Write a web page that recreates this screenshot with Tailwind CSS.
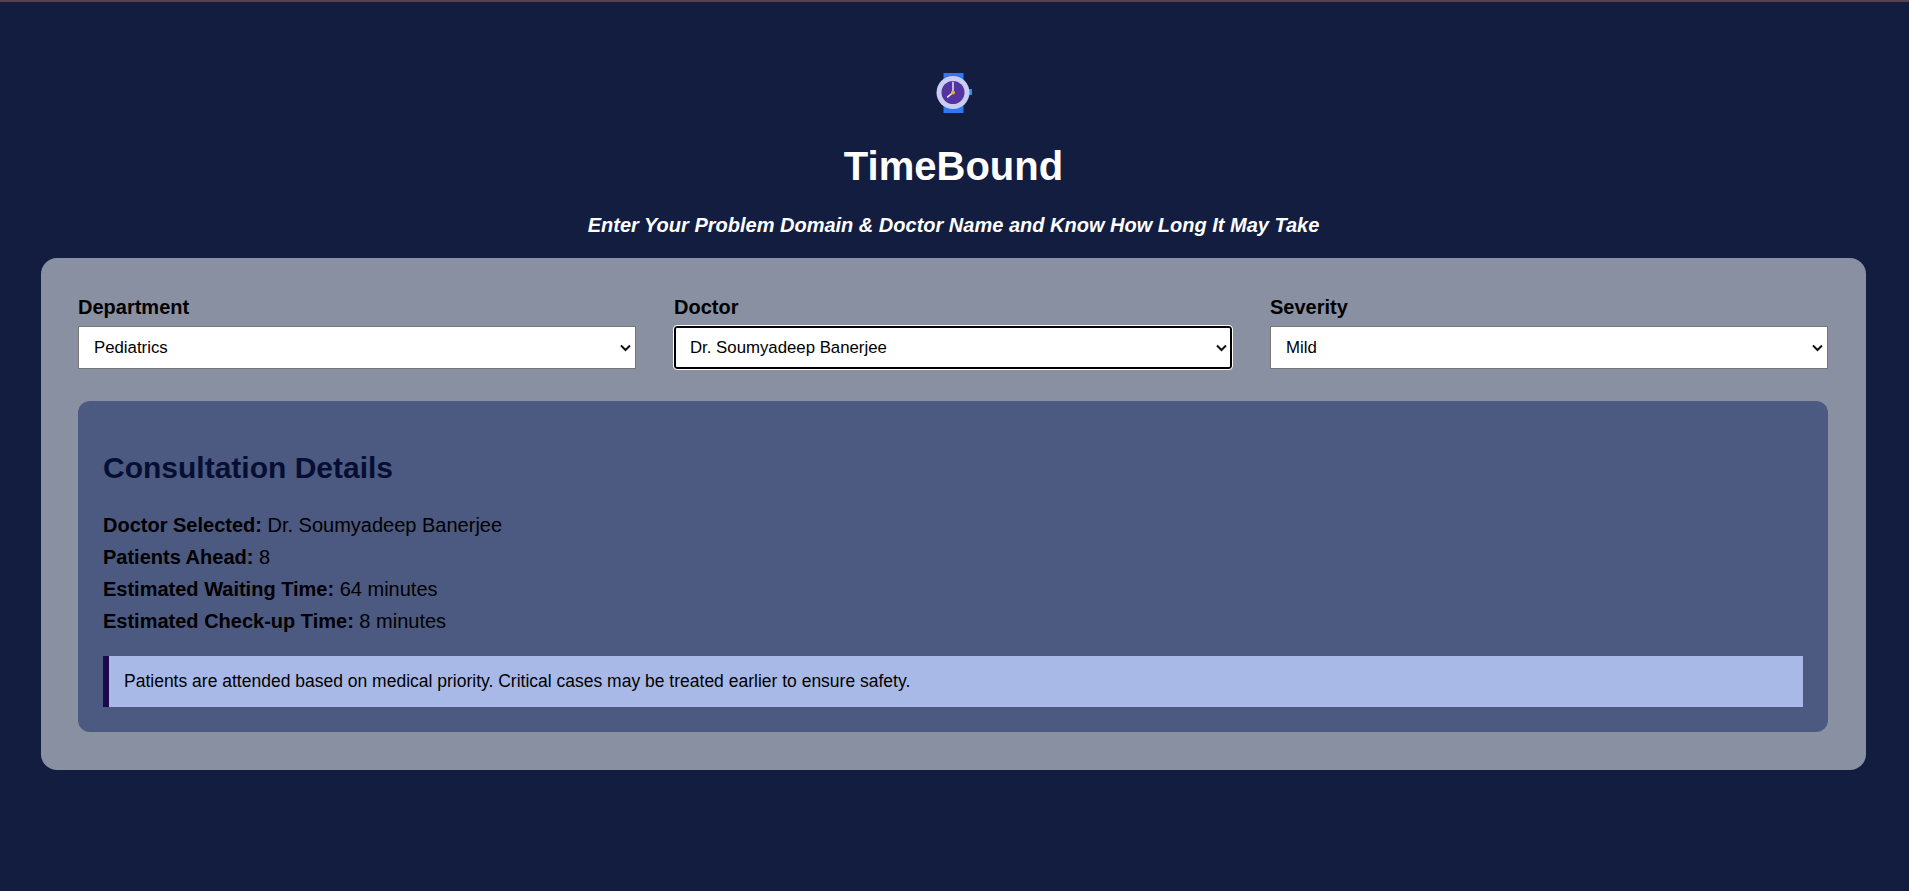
<!DOCTYPE html>
<html>
<head>
    <meta charset="UTF-8" />
    <title>TimeBound</title>
    <script src="https://cdn.jsdelivr.net/npm/@tailwindcss/browser@4"></script>
</head>
<body class="bg-[#121d40] min-h-screen font-['Liberation_Sans',Arial,sans-serif] text-black">
    <div class="h-[2px] bg-[#5a4150]"></div>

    <div class="pr-[2px]">
        <!-- Header -->
        <div class="flex flex-col items-center pt-[70px]">
            <svg class="w-[42px] h-[42px]" viewBox="0 0 42 42">
                <rect x="10.5" y="1" width="20" height="40" fill="#2f78ee" />
                <rect x="36" y="17" width="3" height="6" fill="#2f8ff0" />
                <circle cx="20" cy="20.5" r="16.5" fill="#c9cdf3" />
                <circle cx="20" cy="20.5" r="11.5" fill="#54349e" />
                <path d="M20 20.5V9.7" stroke="#d8daf5" stroke-width="1.6" />
                <path d="M20 20.5L14.2 25.3" stroke="#e8e9fb" stroke-width="1.6" />
                <circle cx="20" cy="20.5" r="2" fill="#e0b32e" />
            </svg>
            <h1 class="mt-[29px] text-[40px] leading-[46px] font-bold text-white">TimeBound</h1>
            <p class="mt-[25px] text-[20px] leading-[23px] font-bold italic text-white">Enter Your Problem Domain &amp; Doctor Name and Know How Long It May Take</p>
        </div>

        <!-- Main card -->
        <div class="mx-[41px] mt-[21px] mb-[40px] pl-[37px] pr-[38px] pt-[38px] pb-[38px] bg-[#8890a2] rounded-[16px]">
            <div class="grid grid-cols-3 gap-[38px]">
                <div>
                    <label class="block mb-[7px] text-[20px] leading-[23px] font-bold">Department</label>
                    <div class="relative">
                        <select class="block w-full h-[43px] pl-[15px] appearance-none bg-white border border-[#767676] text-[16.8px]">
                            <option>Pediatrics</option>
                        </select>
                        <svg class="absolute right-[5px] top-[18px] w-[11px] h-[8px] pointer-events-none" viewBox="0 0 11 8"><path d="M1 1.5L5.5 6L10 1.5" fill="none" stroke="#111" stroke-width="2" /></svg>
                    </div>
                </div>
                <div>
                    <label class="block mb-[7px] text-[20px] leading-[23px] font-bold">Doctor</label>
                    <div class="relative">
                        <select class="block w-full h-[43px] pl-[14px] appearance-none bg-white border-2 border-black rounded-[3px] outline outline-1 outline-white text-[16.8px]">
                            <option>Dr. Soumyadeep Banerjee</option>
                        </select>
                        <svg class="absolute right-[5px] top-[18px] w-[11px] h-[8px] pointer-events-none" viewBox="0 0 11 8"><path d="M1 1.5L5.5 6L10 1.5" fill="none" stroke="#111" stroke-width="2" /></svg>
                    </div>
                </div>
                <div>
                    <label class="block mb-[7px] text-[20px] leading-[23px] font-bold">Severity</label>
                    <div class="relative">
                        <select class="block w-full h-[43px] pl-[15px] appearance-none bg-white border border-[#767676] text-[16.8px]">
                            <option>Mild</option>
                        </select>
                        <svg class="absolute right-[5px] top-[18px] w-[11px] h-[8px] pointer-events-none" viewBox="0 0 11 8"><path d="M1 1.5L5.5 6L10 1.5" fill="none" stroke="#111" stroke-width="2" /></svg>
                    </div>
                </div>
            </div>

            <!-- Consultation details -->
            <div class="mt-[32px] p-[25px] bg-[#4c5980] rounded-[12px]">
                <h2 class="mt-[25px] mb-[24px] text-[30px] leading-[34px] font-bold text-[#060f33]">Consultation Details</h2>
                <p class="text-[20px] leading-[32px]"><b>Doctor Selected:</b> Dr. Soumyadeep Banerjee</p>
                <p class="text-[20px] leading-[32px]"><b>Patients Ahead:</b> 8</p>
                <p class="text-[20px] leading-[32px]"><b>Estimated Waiting Time:</b> 64 minutes</p>
                <p class="text-[20px] leading-[32px]"><b>Estimated Check-up Time:</b> 8 minutes</p>
                <div class="mt-[19px] h-[51px] flex items-center pl-[15px] bg-[#a8b9e8] border-l-[6px] border-[#1c0a4a] text-[17.5px]">
                    Patients are attended based on medical priority. Critical cases may be treated earlier to ensure safety.
                </div>
            </div>
        </div>
    </div>
</body>
</html>
